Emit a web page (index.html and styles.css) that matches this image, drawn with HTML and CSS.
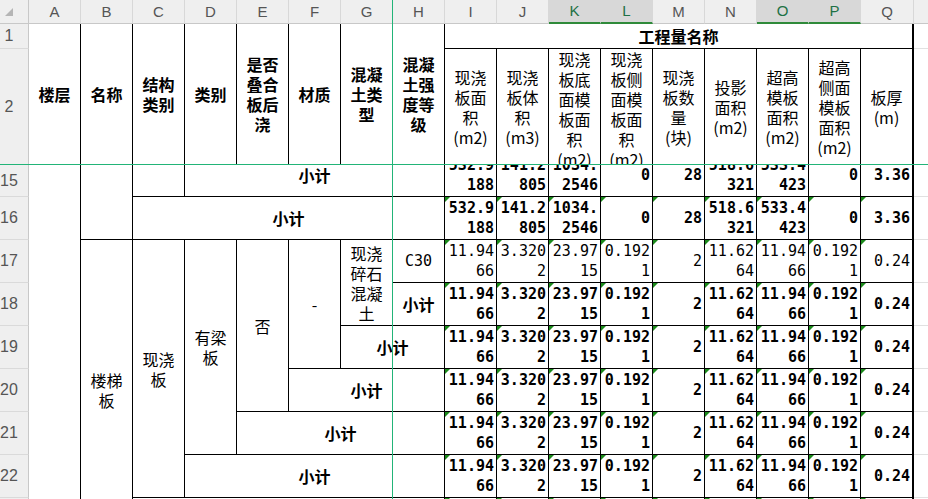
FILE: index.html
```html
<!DOCTYPE html>
<html lang="zh-CN">
<head>
<meta charset="utf-8">
<title>工程量名称</title>
<link rel="stylesheet" href="styles.css">
</head>
<body>
<div class="wrap">
<table class="sheet">
<colgroup>
<col class="w-rh">
<col class="w-c"><col class="w-c"><col class="w-c"><col class="w-c">
<col class="w-c"><col class="w-c"><col class="w-c"><col class="w-c">
<col class="w-c"><col class="w-c"><col class="w-c"><col class="w-c">
<col class="w-c"><col class="w-c"><col class="w-c"><col class="w-c">
<col class="w-q">
<col class="w-r">
</colgroup>
<tr class="h-hdr">
<th class="corner"><svg class="corner-ico" width="8" height="8" viewBox="0 0 8 8"><polygon points="8,0 8,8 0,8" fill="#b5b5b5"/></svg></th>
<th class="ch">A</th><th class="ch">B</th><th class="ch">C</th><th class="ch">D</th>
<th class="ch">E</th><th class="ch">F</th><th class="ch">G</th><th class="ch">H</th>
<th class="ch">I</th><th class="ch">J</th><th class="ch sel">K</th><th class="ch sel">L</th>
<th class="ch">M</th><th class="ch">N</th><th class="ch sel">O</th><th class="ch sel">P</th>
<th class="ch">Q</th><th class="ch"></th>
</tr>
<tr class="h-r1">
<th class="rh">1</th>
<td class="k b" rowspan="2">楼层</td>
<td class="k b" rowspan="2">名称</td>
<td class="k b" rowspan="2">结构<br>类别</td>
<td class="k b" rowspan="2">类别</td>
<td class="k b" rowspan="2">是否<br>叠合<br>板后<br>浇</td>
<td class="k b" rowspan="2">材质</td>
<td class="k b" rowspan="2">混凝<br>土类<br>型</td>
<td class="k b" rowspan="2">混凝<br>土强<br>度等<br>级</td>
<td class="k q b" colspan="9">工程量名称</td>
<td class="x"></td>
</tr>
<tr class="h-r2">
<th class="rh">2</th>
<td class="k">现浇<br>板面<br>积<br>(m2)</td>
<td class="k">现浇<br>板体<br>积<br>(m3)</td>
<td class="k top"><div class="ov">现浇<br>板底<br>面模<br>板面<br>积<br>(m2)</div></td>
<td class="k top"><div class="ov">现浇<br>板侧<br>面模<br>板面<br>积<br>(m2)</div></td>
<td class="k">现浇<br>板数<br>量<br>(块)</td>
<td class="k">投影<br>面积<br>(m2)</td>
<td class="k">超高<br>模板<br>面积<br>(m2)</td>
<td class="k">超高<br>侧面<br>模板<br>面积<br>(m2)</td>
<td class="k q">板厚<br>(m)</td>
<td class="x"></td>
</tr>
<tr class="h-r15">
<th class="rh">15</th>
<td class="k nb" rowspan="9"></td>
<td class="k" rowspan="2"></td>
<td class="k"></td>
<td class="k b clip" colspan="5"><div class="cl"><div class="sh"><span>小计</span></div></div></td>
<td class="k n b clip"><div class="cl"><div class="sh"><span>532.9<br>188</span></div></div></td>
<td class="k n b clip"><div class="cl"><div class="sh"><span>141.2<br>805</span></div></div></td>
<td class="k n b clip"><div class="cl"><div class="sh"><span>1034.<br>2546</span></div></div></td>
<td class="k n b clip"><div class="cl"><div class="sh"><span>0</span></div></div></td>
<td class="k n b clip"><div class="cl"><div class="sh"><span>28</span></div></div></td>
<td class="k n b clip"><div class="cl"><div class="sh"><span>518.6<br>321</span></div></div></td>
<td class="k n b clip"><div class="cl"><div class="sh"><span>533.4<br>423</span></div></div></td>
<td class="k n b clip"><div class="cl"><div class="sh"><span>0</span></div></div></td>
<td class="k q n b clip"><div class="cl"><div class="sh"><span>3.36</span></div></div></td>
<td class="x"></td>
</tr>
<tr class="h-r">
<th class="rh">16</th>
<td class="k b" colspan="6">小计</td>
<td class="k n b tri">532.9<br>188</td>
<td class="k n b tri">141.2<br>805</td>
<td class="k n b tri">1034.<br>2546</td>
<td class="k n b tri">0</td>
<td class="k n b tri">28</td>
<td class="k n b tri">518.6<br>321</td>
<td class="k n b tri">533.4<br>423</td>
<td class="k n b tri">0</td>
<td class="k q n b tri">3.36</td>
<td class="x"></td>
</tr>
<tr class="h-r">
<th class="rh">17</th>
<td class="k" rowspan="7">楼梯<br>板</td>
<td class="k" rowspan="6">现浇<br>板</td>
<td class="k" rowspan="5">有梁<br>板</td>
<td class="k" rowspan="4">否</td>
<td class="k" rowspan="3">-</td>
<td class="k" rowspan="2">现浇<br>碎石<br>混凝<br>土</td>
<td class="k lat">C30</td>
<td class="k n tri">11.94<br>66</td>
<td class="k n tri">3.320<br>2</td>
<td class="k n tri">23.97<br>15</td>
<td class="k n tri">0.192<br>1</td>
<td class="k n tri">2</td>
<td class="k n tri">11.62<br>64</td>
<td class="k n tri">11.94<br>66</td>
<td class="k n tri">0.192<br>1</td>
<td class="k q n tri">0.24</td>
<td class="x"></td>
</tr>
<tr class="h-r">
<th class="rh">18</th>
<td class="k b">小计</td>
<td class="k n b tri">11.94<br>66</td>
<td class="k n b tri">3.320<br>2</td>
<td class="k n b tri">23.97<br>15</td>
<td class="k n b tri">0.192<br>1</td>
<td class="k n b tri">2</td>
<td class="k n b tri">11.62<br>64</td>
<td class="k n b tri">11.94<br>66</td>
<td class="k n b tri">0.192<br>1</td>
<td class="k q n b tri">0.24</td>
<td class="x"></td>
</tr>
<tr class="h-r">
<th class="rh">19</th>
<td class="k b" colspan="2">小计</td>
<td class="k n b tri">11.94<br>66</td>
<td class="k n b tri">3.320<br>2</td>
<td class="k n b tri">23.97<br>15</td>
<td class="k n b tri">0.192<br>1</td>
<td class="k n b tri">2</td>
<td class="k n b tri">11.62<br>64</td>
<td class="k n b tri">11.94<br>66</td>
<td class="k n b tri">0.192<br>1</td>
<td class="k q n b tri">0.24</td>
<td class="x"></td>
</tr>
<tr class="h-r">
<th class="rh">20</th>
<td class="k b" colspan="3">小计</td>
<td class="k n b tri">11.94<br>66</td>
<td class="k n b tri">3.320<br>2</td>
<td class="k n b tri">23.97<br>15</td>
<td class="k n b tri">0.192<br>1</td>
<td class="k n b tri">2</td>
<td class="k n b tri">11.62<br>64</td>
<td class="k n b tri">11.94<br>66</td>
<td class="k n b tri">0.192<br>1</td>
<td class="k q n b tri">0.24</td>
<td class="x"></td>
</tr>
<tr class="h-r">
<th class="rh">21</th>
<td class="k b" colspan="4">小计</td>
<td class="k n b tri">11.94<br>66</td>
<td class="k n b tri">3.320<br>2</td>
<td class="k n b tri">23.97<br>15</td>
<td class="k n b tri">0.192<br>1</td>
<td class="k n b tri">2</td>
<td class="k n b tri">11.62<br>64</td>
<td class="k n b tri">11.94<br>66</td>
<td class="k n b tri">0.192<br>1</td>
<td class="k q n b tri">0.24</td>
<td class="x"></td>
</tr>
<tr class="h-r">
<th class="rh">22</th>
<td class="k b" colspan="5">小计</td>
<td class="k n b tri">11.94<br>66</td>
<td class="k n b tri">3.320<br>2</td>
<td class="k n b tri">23.97<br>15</td>
<td class="k n b tri">0.192<br>1</td>
<td class="k n b tri">2</td>
<td class="k n b tri">11.62<br>64</td>
<td class="k n b tri">11.94<br>66</td>
<td class="k n b tri">0.192<br>1</td>
<td class="k q n b tri">0.24</td>
<td class="x"></td>
</tr>
<tr class="h-r">
<th class="rh">23</th>
<td class="k b" colspan="6">小计</td>
<td class="k n b tri">11.94<br>66</td>
<td class="k n b tri">3.320<br>2</td>
<td class="k n b tri">23.97<br>15</td>
<td class="k n b tri">0.192<br>1</td>
<td class="k n b tri">2</td>
<td class="k n b tri">11.62<br>64</td>
<td class="k n b tri">11.94<br>66</td>
<td class="k n b tri">0.192<br>1</td>
<td class="k q n b tri">0.24</td>
<td class="x"></td>
</tr>
</table>
<div class="fz fz-v"></div>
<div class="fz fz-h"></div>
</div>
</body>
</html>
```
FILE: styles.css
```css
html, body {
  margin: 0;
  padding: 0;
  background: #fff;
}
body {
  width: 928px;
  height: 499px;
  overflow: hidden;
}
.wrap {
  position: relative;
  width: 928px;
  height: 499px;
  overflow: hidden;
}
.sheet {
  border-collapse: separate;
  border-spacing: 0;
  table-layout: fixed;
  width: 1014px;
  font-family: "Noto Sans CJK SC", "Noto Sans CJK JP", sans-serif;
  font-size: 16px;
  line-height: 20px;
  color: #000;
}
.w-rh { width: 29px; }
.w-c { width: 52px; }
.w-q { width: 53px; }
.w-r { width: 100px; }

.sheet th,
.sheet td {
  padding: 0;
  vertical-align: middle;
  text-align: center;
  overflow: hidden;
  white-space: nowrap;
  font-weight: 400;
}
.h-hdr { height: 24px; }
.h-r1 { height: 25px; }
.h-r2 { height: 116px; }
.h-r15 { height: 32px; }
.h-r { height: 43px; }

.corner {
  background: #efefef;
  border-right: 1px solid #c8c8c8;
  border-bottom: 1px solid #c8c8c8;
}
.sheet .corner {
  vertical-align: top;
  text-align: left;
}
.corner-ico {
  display: block;
  margin: 8px 0 0 5px;
}
.ch {
  background: #efefef;
  color: #555;
  font-family: "Liberation Sans", Arial, sans-serif;
  font-size: 15px;
  line-height: 20px;
  border-right: 1px solid #d8d8d8;
  border-bottom: 1px solid #c8c8c8;
}
.ch.sel {
  background: #d8d8d8;
  color: #1e7145;
  border-bottom: 2px solid #2f8a3a;
}
.sheet .rh {
  background: #efefef;
  color: #555;
  font-family: "Liberation Sans", Arial, sans-serif;
  font-size: 16px;
  border-right: 1px solid #c8c8c8;
  border-bottom: 1px solid #dadada;
  padding-right: 10px;
}
.k {
  border-right: 1px solid #000;
  border-bottom: 1px solid #000;
}
.nb { border-bottom: 0; }
.q { border-right: 2px solid #000; }
.sheet .b { font-weight: 700; }
.x {
  border-right: 1px solid #e1e1e1;
  border-bottom: 1px solid #e1e1e1;
}
.sheet .n {
  text-align: right;
  padding-right: 2px;
  font-family: "DejaVu Sans Mono", "Liberation Mono", monospace;
  font-size: 15px;
  line-height: 20px;
}
.lat {
  font-family: "DejaVu Sans Mono", "Liberation Mono", monospace;
  font-size: 15px;
}
.tri { position: relative; }
.tri::before {
  content: "";
  position: absolute;
  left: 0;
  top: 0;
  border-top: 5px solid #1b8a1b;
  border-right: 5px solid transparent;
}
.sheet .top { vertical-align: top; }
.ov {
  height: 115px;
  overflow: hidden;
}
.sheet .clip { vertical-align: top; }
.cl {
  height: 31px;
  overflow: hidden;
}
.sh {
  height: 42px;
  margin-top: -11px;
  display: flex;
  flex-direction: column;
  justify-content: center;
}
.fz {
  position: absolute;
  background: #22b478;
  z-index: 2;
}
.fz-v {
  left: 392px;
  top: 0;
  width: 1px;
  height: 499px;
}
.fz-h {
  left: 0;
  top: 164px;
  width: 928px;
  height: 1px;
}
```
